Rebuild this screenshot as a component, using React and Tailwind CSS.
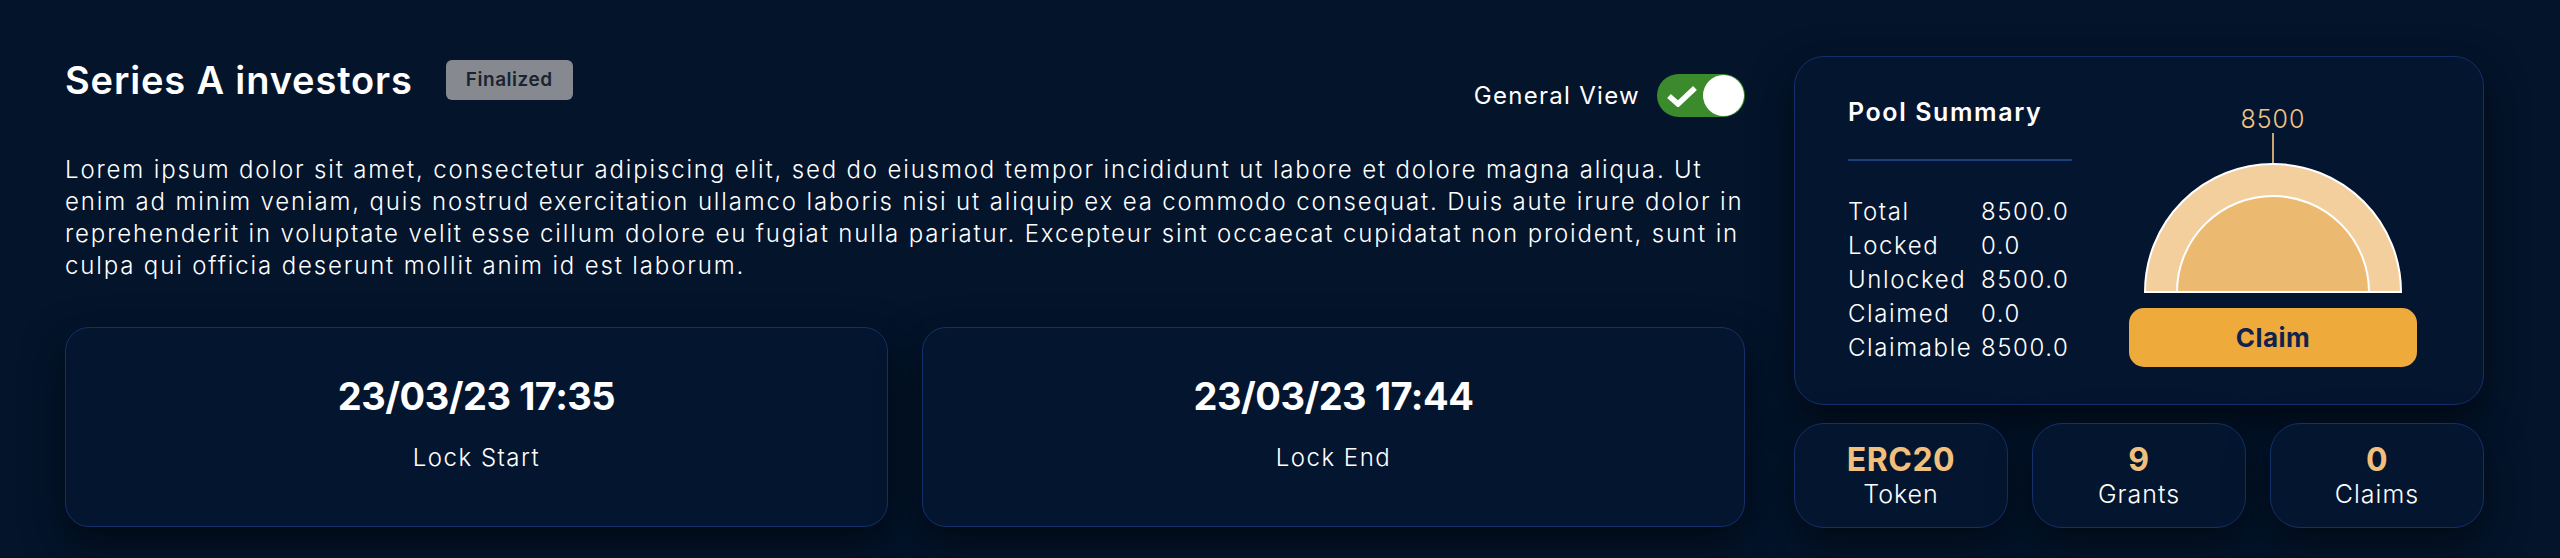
import React from 'react';

const stats = [
  { value: 'ERC20', label: 'Token' },
  { value: '9', label: 'Grants' },
  { value: '0', label: 'Claims' },
];

const summary = [
  ['Total', '8500.0'],
  ['Locked', '0.0'],
  ['Unlocked', '8500.0'],
  ['Claimed', '0.0'],
  ['Claimable', '8500.0'],
];

function LockCard({ date, label }) {
  return (
    <div className="flex-1 h-[200px] rounded-[24px] border border-[#13306a] bg-[#04162f] shadow-[0_16px_40px_rgba(0,0,0,0.55)] flex flex-col items-center pt-[48px]">
      <div className="text-[38px] leading-[40px] font-bold text-white tracking-[-0.5px]">{date}</div>
      <div className="mt-[27px] text-[24px] leading-[30px] font-light text-white tracking-[1.5px]">{label}</div>
    </div>
  );
}

function Gauge() {
  return (
    <svg width="260" height="133" viewBox="0 0 260 133">
      <path d="M2 130 A128 128 0 0 1 258 130 Z" fill="#f3cf9e" stroke="#ffffff" strokeWidth="2" />
      <path d="M34 130 A96 96 0 0 1 226 130 Z" fill="#ecb971" stroke="#ffffff" strokeWidth="2" />
    </svg>
  );
}

export default function App() {
  return (
    <div className="min-h-[558px] bg-[#03142b] font-['Inter','Noto_Sans',sans-serif] text-white flex pl-[65px] pt-[56px]">
      {/* left column */}
      <div className="w-[1680px] flex flex-col">
        <div className="flex justify-between items-start">
          <div className="flex items-center mt-[4px]">
            <h1 className="text-[38px] leading-[40px] font-semibold tracking-[0.85px]">Series A investors</h1>
            <span className="ml-[33px] w-[127px] h-[40px] flex items-center justify-center rounded-[6px] bg-[#868a90] text-[#1b2330] text-[19px] font-semibold tracking-[0.5px]">
              Finalized
            </span>
          </div>
          <div className="flex items-center mt-[18px]">
            <span className="text-[24px] font-normal tracking-[1.3px]">General View</span>
            <div className="ml-[17px] w-[88px] h-[43px] rounded-full bg-[#3b8a2c] flex items-center justify-between pl-[9px] pr-[1px]">
              <svg width="32" height="22" viewBox="0 0 32 22">
                <path d="M3 11 L12 19 L29 3" fill="none" stroke="#ffffff" strokeWidth="5.5" strokeLinejoin="miter" />
              </svg>
              <div className="w-[41px] h-[41px] rounded-full bg-white" />
            </div>
          </div>
        </div>

        <p className="mt-[37px] text-[24px] leading-[32px] font-light tracking-[1.85px] whitespace-nowrap">
          Lorem ipsum dolor sit amet, consectetur adipiscing elit, sed do eiusmod tempor incididunt ut labore et dolore magna aliqua. Ut
          <br />
          enim ad minim veniam, quis nostrud exercitation ullamco laboris nisi ut aliquip ex ea commodo consequat. Duis aute irure dolor in
          <br />
          reprehenderit in voluptate velit esse cillum dolore eu fugiat nulla pariatur. Excepteur sint occaecat cupidatat non proident, sunt in
          <br />
          culpa qui officia deserunt mollit anim id est laborum.
        </p>

        <div className="mt-[45px] flex gap-[34px]">
          <LockCard date="23/03/23 17:35" label="Lock Start" />
          <LockCard date="23/03/23 17:44" label="Lock End" />
        </div>
      </div>

      {/* right column */}
      <div className="ml-[49px] w-[690px] flex flex-col">
        <div className="h-[349px] rounded-[30px] border border-[#13306a] bg-[#04162f] shadow-[0_16px_40px_rgba(0,0,0,0.55)] flex pl-[53px] pt-[40px]">
          <div className="w-[224px] flex flex-col">
            <h2 className="text-[25px] leading-[30px] font-semibold tracking-[1.6px]">Pool Summary</h2>
            <div className="mt-[32px] h-[2px] bg-[#1c3d7c]" />
            <div className="mt-[34px] flex flex-col">
              {summary.map(([k, v]) => (
                <div key={k} className="flex h-[34px] items-center text-[24px] font-light tracking-[1.6px]">
                  <span className="w-[133px]">{k}</span>
                  <span>{v}</span>
                </div>
              ))}
            </div>
          </div>
          <div className="ml-[57px] w-[288px] flex flex-col items-center">
            <div className="mt-[8px] text-[25px] leading-[28px] font-light text-[#f0c582] tracking-[1px]">8500</div>
            <div className="w-[2px] h-[30px] bg-[#c9a572]" />
            <div className="-mt-[1px]">
              <Gauge />
            </div>
            <button className="mt-[13px] w-[288px] h-[59px] rounded-[15px] bg-[#eeab3c] text-[#10224f] text-[26px] font-bold tracking-[0.5px]">
              Claim
            </button>
          </div>
        </div>

        <div className="mt-[18px] flex gap-[24px]">
          {stats.map((s) => (
            <div key={s.label} className="w-[214px] h-[105px] rounded-[30px] border border-[#13306a] bg-[#04162f] shadow-[0_16px_40px_rgba(0,0,0,0.5)] flex flex-col items-center pt-[18px]">
              <div className="text-[32px] leading-[36px] font-bold text-[#f2c07c] tracking-[0.5px]">{s.value}</div>
              <div className="text-[25px] leading-[32px] font-light tracking-[1px]">{s.label}</div>
            </div>
          ))}
        </div>
      </div>
    </div>
  );
}
